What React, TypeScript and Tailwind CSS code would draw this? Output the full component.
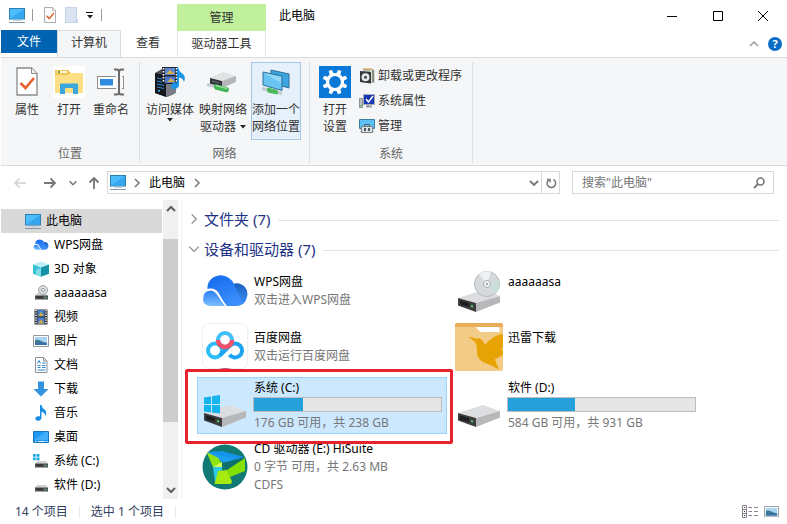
import type { ReactNode } from "react";

type IconProps = { className?: string };

function MonitorIcon({ className }: IconProps) {
  return (
    <svg viewBox="0 0 18 17" className={className} aria-hidden="true">
      <rect x="1.5" y="1.5" width="15" height="10.5" fill="#4cbcfb" stroke="#2d7fae" />
      <path d="M2 11.5 16 2v9.500z" fill="#35a7f0" />
      <path d="M5 13.500h8" stroke="#b9cfdd" />
      <path d="M1 15.500h16" stroke="#8298a8" />
    </svg>
  );
}

function CheckPage({ className }: IconProps) {
  return (
    <svg viewBox="0 0 22 29" className={className} aria-hidden="true">
      <path d="M1 1h14.500L21 6.500V28H1z" fill="#fff" stroke="#8a8a8a" strokeWidth="1.300" />
      <path d="M15.500 1v5.500H21" fill="#eee" stroke="#8a8a8a" />
      <path d="m4.500 16 5 5L18 11" fill="none" stroke="#e8622c" strokeWidth="2.600" />
    </svg>
  );
}

function FadedFolder({ className }: IconProps) {
  return (
    <svg viewBox="0 0 13 16" className={className} aria-hidden="true">
      <path d="M.5.5h11v11l1 1v3H.5z" fill="#d9e4f3" stroke="#c5d3e8" />
      <path d="M10.500 11.500h2v4h-2z" fill="#c8d8ee" />
    </svg>
  );
}

function OpenFolder({ className }: IconProps) {
  return (
    <svg viewBox="0 0 32 32" className={className} aria-hidden="true">
      <path d="M0 0h32v32H0z" fill="#fff" />
      <path d="M2 4h13l3 3h12v7H2z" fill="#efc453" />
      <path d="M4 5h10v2H4z" fill="#fff6d8" />
      <path d="M5 5h2v2H5z" fill="#66a33a" />
      <path d="M2 9h13l2-2h13v20H2z" fill="#fddf86" />
      <path d="M7 28V18.500q0-1 1-1h16q1 0 1 1V28h-5v-5q0-1-1-1h-6q-1 0-1 1v5z" fill="#3ba7dc" />
    </svg>
  );
}

function RenameIcon({ className }: IconProps) {
  return (
    <svg viewBox="0 0 28 28" className={className} aria-hidden="true">
      <rect x=".5" y="8.500" width="26" height="12" fill="#fff" stroke="#8d8d8d" />
      <rect x="3" y="11" width="13" height="6.500" fill="#2f8be0" />
      <path d="M19 8h6v13h-6z" fill="#f5f6f7" />
      <path d="M17 1.500h2.500q2.500 0 2.500 2.500v20q0 2.500-2.500 2.500H17M27 1.500h-2.500Q22 1.500 22 4v20q0 2.500 2.500 2.500H27" fill="none" stroke="#6a6a6a" strokeWidth="2" />
    </svg>
  );
}

function MediaIcon({ className }: IconProps) {
  return (
    <svg viewBox="0 0 32 32" className={className} aria-hidden="true">
      <path d="m1 7 7-4 12 3v22l-7 3L1 27z" fill="#4d5157" />
      <path d="m1 7 11 2.500V31L1 27z" fill="#16191d" />
      <path d="m12 9.500 10-3V27l-10 4z" fill="#7a7e84" />
      <path d="m3 12 7 1.500M3 15l7 1.500M3 18l7 1.500M3 21l7 1.500" stroke="#2d87d8" strokeWidth="1.200" />
      <path d="M4 24h2v1.500H4z" fill="#4ab1ff" />
      <path d="M8 1h16v17H8z" fill="#22262c" />
      <path d="M11 2h10v7H11z" fill="#5c85d6" />
      <path d="M11 10.500h10V17H11z" fill="#5077ca" />
      <path d="m12 8 4-4 5 4zM13 16l4-4 4 4z" fill="#d4b04a" />
      <path d="M9.500 2v15M22.500 2v15" stroke="#fff" strokeWidth="1.600" strokeDasharray="1.500 1.500" />
      <path d="M24 1q1 5 5 7 3 3 1 8-1-4-5-4.500V18q.5 4-4 5-4 .5-4-2.500t4-4q1.500-.3 2 .2V1z" fill="#1b94e6" />
    </svg>
  );
}

function NetworkDrive({ className }: IconProps) {
  return (
    <svg viewBox="0 0 32 24" className={className} aria-hidden="true">
      <path d="M3 8 16 2l13 4-14 5z" fill="#e1e3e5" />
      <path d="m15 11 14-5v6l-14 6z" fill="#b4b7ba" />
      <path d="m3 8 12 3v7L3 14z" fill="#34373a" />
      <path d="m5 11 7 2" stroke="#6f7377" />
      <path d="M0 14.500 22 20" stroke="#c3cacf" strokeWidth="3" />
      <path d="m8 14 13 3.500q2 3-1 5L8 19.500q-2-3 0-5.500z" fill="#46b758" />
      <path d="m9 15.500 11 3" stroke="#92df9c" strokeWidth="1.500" />
    </svg>
  );
}

function NetworkPlace({ className }: IconProps) {
  return (
    <svg viewBox="0 0 32 28" className={className} aria-hidden="true">
      <path d="m11 2 18 4v14l-18-5z" fill="#3ca5de" stroke="#2c6e98" />
      <path d="m3 4 19 4v14.500L3 17z" fill="#6ac4f2" stroke="#2c6e98" />
      <path d="m4 5 17 4v6z" fill="#94d7f8" />
      <path d="M2 20.500 22 25.500" stroke="#c3cacf" strokeWidth="3" />
      <path d="m8 19.500 9 2.500q2 2.500 0 4.500l-9-2q-2-2.500 0-5z" fill="#49b85a" />
    </svg>
  );
}

function GearTile({ className }: IconProps) {
  return (
    <svg viewBox="0 0 32 32" className={className} aria-hidden="true">
      <path d="M0 0h32v32H0z" fill="#0a78d7" />
      <circle cx="16" cy="16" r="7.500" fill="none" stroke="#fff" strokeWidth="3.200" />
      {[22.5, 67.5, 112.5, 157.5, 202.5, 247.5, 292.5, 337.5].map((angle) => (
        <path key={angle} d="M13.800 8 14.300 3.500h3.400L18.200 8z" fill="#fff" transform={`rotate(${angle} 16 16)`} />
      ))}
    </svg>
  );
}

function ProgramsIcon({ className }: IconProps) {
  return (
    <svg viewBox="0 0 16 16" className={className} aria-hidden="true">
      <path d="M4 1h10l1.500 1.500V15H4z" fill="#b9bdb9" />
      <path d="M11 2h2v12h-2z" fill="#dfe4de" />
      <path d="M13 2h2v12h-2z" fill="#87927c" />
      <path d="m1 3 11 1v11.500L1 14z" fill="#33373a" />
      <circle cx="6.500" cy="9.300" r="4" fill="#e5e8ea" />
      <circle cx="6.500" cy="9.300" r="1.500" fill="#444" />
      <path d="M4 1h9" stroke="#d39434" />
    </svg>
  );
}

function SystemIcon({ className }: IconProps) {
  return (
    <svg viewBox="0 0 16 16" className={className} aria-hidden="true">
      <path d="M.5 5.500h3v9h-3z" fill="#bfc3c4" stroke="#8c9294" />
      <path d="M1.500 12h1v1.500h-1z" fill="#35a93d" />
      <path d="M4.500 1.500h11v10h-11z" fill="#1a37b4" stroke="#a7abb0" />
      <path d="m7 6 2.500 3L14 3" fill="none" stroke="#fff" strokeWidth="1.500" />
      <path d="M7 13.500h6M9 12v2" stroke="#9a9fa4" strokeWidth="2" />
    </svg>
  );
}

function ManageIcon({ className }: IconProps) {
  return (
    <svg viewBox="0 0 16 16" className={className} aria-hidden="true">
      <path d="M.5 1.500h15v9H.5z" fill="#5bc1f5" stroke="#3a7fa6" />
      <path d="M1 13.500h14" stroke="#a3adb4" />
      <path d="M5.500 8V6.500h5V8" fill="none" stroke="#555d63" />
      <path d="M2.500 8.500h11v6h-11z" fill="#dfe3e6" stroke="#778087" />
      <path d="M5 10h2v3H5zM9 10h2v3H9z" fill="#4e565c" />
    </svg>
  );
}

function WpsCloud({ className }: IconProps) {
  return (
    <svg viewBox="0 0 48 34" className={className} aria-hidden="true">
      <defs>
        <linearGradient id="cloudMain" x1="0" y1="0" x2=".5" y2="1">
          <stop offset="0" stopColor="#1268ee" />
          <stop offset="1" stopColor="#3a8dfa" />
        </linearGradient>
        <linearGradient id="cloudFront" x1="0" y1="0" x2="0" y2="1">
          <stop offset="0" stopColor="#2a7ef5" />
          <stop offset="1" stopColor="#7cc0ff" />
        </linearGradient>
        <linearGradient id="cloudBack" x1="0" y1="0" x2="0" y2="1">
          <stop offset="0" stopColor="#1a5fbe" />
          <stop offset="1" stopColor="#3a92f5" />
        </linearGradient>
      </defs>
      <path d="M28 11q10-4.500 16 2 3.500 5 2 10-2 8-8 8.500z" fill="url(#cloudBack)" />
      <path d="M6.500 15Q6 7 13 3q8-4 15 1 3 2 5 6l7 16q1 3-1 5-1 1-3 1H25L17 18q-4-5-10.500-3z" fill="url(#cloudMain)" />
      <path d="M2 25q0-8 7.500-8.500 4 0 7 4.500 3 5 8 11H9q-7-1-7-7z" fill="url(#cloudFront)" />
      <path d="M5.500 16q6-2 10 2.500Q19 23 22 28l3.500 4.500" fill="none" stroke="#fff" strokeWidth="1.300" />
    </svg>
  );
}

function CubeIcon({ className }: IconProps) {
  return (
    <svg viewBox="0 0 16 16" className={className} aria-hidden="true">
      <path d="m0 3.500 8-3 8 3-8 3z" fill="#bdeef4" />
      <path d="m0 3.500 8 3v9.200l-8-3z" fill="#35c0d4" />
      <path d="m16 3.500-8 3v9.200l8-3z" fill="#1591a8" />
      <path d="M8 6.500 3 9v5l5 1.700z" fill="#7fdde8" />
    </svg>
  );
}

function DriveIcon({ className, windows, disc }: IconProps & { windows?: boolean; disc?: boolean }) {
  return (
    <svg viewBox="0 0 48 48" className={className} aria-hidden="true">
      <path d="M3 31 28 23l17 6-24 7z" fill="#dcdddf" />
      <path d="m21 36 24-7v6.500L21 45z" fill="#b7b8ba" />
      <path d="m3 31 18 5v9L3 38.500z" fill="#3b3d3f" />
      <path d="m5 33.500 9 2.500v4L5 37.500z" fill="#1c1e1f" />
      <path d="m16 38 2 .6v2l-2-.6z" fill="#53d266" />
      {disc && (
        <g>
          <circle cx="32" cy="17" r="12.500" fill="#d5d9db" stroke="#b3b7b9" />
          <path d="M32 17 24 7.500A12.500 12.500 0 0 1 36 5z" fill="#eef1f2" />
          <path d="m32 17 12-3a12.500 12.500 0 0 1-3 12z" fill="#c9ded9" />
          <circle cx="32" cy="17" r="3.500" fill="#f5f5f5" stroke="#a8acae" />
          <circle cx="32" cy="17" r="1.300" fill="#aaa" />
        </g>
      )}
      {windows && <path d="M3 15.500 10 14.500v7.500H3zM11 14.300 19 13v9h-8zM3 23h7v7.500l-7-1zM11 23h8v8.500l-8-1z" fill="#14b4ee" />}
    </svg>
  );
}

function SmallDrive({ className, windows, disc }: IconProps & { windows?: boolean; disc?: boolean }) {
  return (
    <svg viewBox="0 0 16 16" className={className} aria-hidden="true">
      <path d="M4 8h9l2 3H2z" fill="#cfd1d3" />
      <path d="M2 10.500h13v4H2z" fill="#4b4f51" />
      <path d="M3.500 12h6" stroke="#222" />
      <path d="M11.500 12h2v1.200h-2z" fill="#58d46b" />
      {disc && (
        <>
          <circle cx="10" cy="5" r="4.500" fill="#dadddf" stroke="#a2a5a7" />
          <circle cx="10" cy="5" r="1.500" fill="#fff" stroke="#999" />
        </>
      )}
      {windows && <path d="M0 1h2.700v2.700H0zM3.500 1h3v2.700h-3zM0 4.500h2.700v2.700H0zM3.500 4.500h3v2.700h-3z" fill="#18abe4" />}
    </svg>
  );
}

function VideoIcon({ className }: IconProps) {
  return (
    <svg viewBox="0 0 16 16" className={className} aria-hidden="true">
      <path d="M1.500.5h13v15h-13z" fill="#2b2d30" />
      <path d="M4.500 1h7v6.500h-7zM4.500 8.500h7V15h-7z" fill="#4a7fd0" />
      <path d="m5 7 3-4 3 4zM5 14.500l3-4 3 4z" fill="#cfaa3c" />
      <path d="M3 1v14M13 1v14" stroke="#fff" strokeWidth="1.500" strokeDasharray="1.200 1.200" />
    </svg>
  );
}

function PictureIcon({ className }: IconProps) {
  return (
    <svg viewBox="0 0 16 12" className={className} aria-hidden="true">
      <path d="M.5.500h15v11H.5z" fill="#fff" stroke="#8f9aa3" />
      <path d="M2 2h12v8H2z" fill="#a8d5f3" />
      <path d="M2 5q4-1 7 1.500 3 1.500 5 1V10H2z" fill="#3c7a8e" />
      <path d="M2 8.500q6-1.500 12 0V10H2z" fill="#3a6fae" />
    </svg>
  );
}

function DocIcon({ className }: IconProps) {
  return (
    <svg viewBox="0 0 16 16" className={className} aria-hidden="true">
      <path d="M2.500.5h8l3.500 3.500v11.500H2.500z" fill="#fff" stroke="#8b9297" />
      <path d="M10.500.5V4H14" fill="none" stroke="#8b9297" />
      <path d="m4.500 6.500 1.500-3 1.500 3M9 6h3.500M4.500 8.500h3M9 8.500h3.500M4.500 10.500h3M9 10.500h3.500M4.500 13h8" fill="none" stroke="#2c8ad0" />
    </svg>
  );
}

function DownloadIcon({ className }: IconProps) {
  return (
    <svg viewBox="0 0 16 16" className={className} aria-hidden="true">
      <path d="M5 .5h6V8h4.500L8 15.500.5 8H5z" fill="#3593de" />
    </svg>
  );
}

function MusicIcon({ className }: IconProps) {
  return (
    <svg viewBox="0 0 16 16" className={className} aria-hidden="true">
      <path d="M7 0h1.500q.5 3 3 4.500 3 2.500.8 6.500-.3-3.500-3.800-4.500v6q0 3-3.500 3.300-2.700 0-2.700-2 0-2.300 3.200-2.600H7z" fill="#1790e4" />
    </svg>
  );
}

function DesktopIcon({ className }: IconProps) {
  return (
    <svg viewBox="0 0 16 12" className={className} aria-hidden="true">
      <path d="M.5.500h15v11H.5z" fill="#1e9af5" stroke="#1576bd" />
      <path d="M1 9 12 1h3v8z" fill="#41aefb" />
      <path d="M2 10.500h1.500M5 10.500h7M13 10.500h1.500" stroke="#d7efff" />
    </svg>
  );
}

function BaiduIcon({ className }: IconProps) {
  return (
    <svg viewBox="0 0 48 48" className={className} aria-hidden="true">
      <rect x="1.500" y=".5" width="45" height="45" rx="6" fill="#fff" stroke="#efefef" />
      <circle cx="14" cy="27.500" r="7" fill="none" stroke="#2fbdf7" strokeWidth="4" />
      <path d="M28.500 31.700A7 7 0 1 0 29 22.600L19 32.400" fill="none" stroke="#1ea4f3" strokeWidth="4" />
      <circle cx="24" cy="17" r="7" fill="none" stroke="#40c0f8" strokeWidth="4" />
      <path d="M17 17a7 7 0 0 0 14 0" fill="none" stroke="#f5506c" strokeWidth="4.500" />
      <path d="M16 46.500q8-3 17 0z" fill="#c34a7a" />
    </svg>
  );
}

function ThunderIcon({ className }: IconProps) {
  return (
    <svg viewBox="0 0 48 48" className={className} aria-hidden="true">
      <rect width="48" height="48" rx="2" fill="#f2cb86" />
      <path d="M0 2q0-2 2-2h44q2 0 2 2v2H0z" fill="#e7ad58" />
      <path d="M21 4h22q1.500 0 1.500 1.500V9H27q-3 0-6-5z" fill="#fff" />
      <path d="M13 14q6 0 8 2 3-2 6 1 2 2 3 5 8-10 18-11v13l-2 2 2 1v5q-5 3-8 4 1 4 4 10.500-9-5-16-7.500-7-4-6-12 0-5-2-8-3-3-7-5z" fill="#e6a303" />
    </svg>
  );
}

function HiSuiteIcon({ className }: IconProps) {
  return (
    <svg viewBox="0 0 48 48" className={className} aria-hidden="true">
      <circle cx="24" cy="24" r="22.500" fill="#117a72" />
      <path d="m6 9 15-1 22 6-17 5z" fill="#1593ea" />
      <path d="m6 9 18 12 9-6L17 12z" fill="#1aa0ee" />
      <path d="m20 20 24-5-17 12z" fill="#0f6f6a" />
      <path d="M44 15v13l-15 6-3-7z" fill="#84e000" />
      <path d="m5.500 9 12 6 3.500 7-9 2z" fill="#8fe411" />
      <path d="m12 24 9-2v5l-4 8-3 4z" fill="#2fc9e8" />
      <path d="m17 28 9-1 5 11.500-1 2.500H13.500z" fill="#a6ea10" />
      <path d="m12 24 9-5v5z" fill="#d6fb57" />
    </svg>
  );
}

function Stroke({ d, className, box = "0 0 12 12", width = 1.5 }: IconProps & { d: string; box?: string; width?: number }) {
  return (
    <svg viewBox={box} className={className} fill="none" stroke="currentColor" strokeWidth={width} aria-hidden="true">
      <path d={d} />
    </svg>
  );
}

const chevronRight = "m4 2 4 4-4 4";
const chevronDown = "m2 4 4 4 4-4";
const chevronUp = "m2 8 4-4 4 4";

function Caret() {
  return (
    <svg viewBox="0 0 6 4" className="h-1 w-1.5 shrink-0" aria-hidden="true">
      <path d="M0 0h6L3 3.500z" fill="#222" />
    </svg>
  );
}

function BigButton({ icon, lines, caret, active }: { icon: ReactNode; lines: string[]; caret?: "below" | "inline"; active?: boolean }) {
  return (
    <button
      type="button"
      className={`flex h-[78px] flex-col items-center px-px ${active ? "bg-[#e6f0fa] outline-1 -outline-offset-1 outline-[#a6c8ea]" : ""}`}
    >
      <span className="flex h-[39px] items-center justify-center">{icon}</span>
      {lines.map((line, i) => (
        <span key={line} className="flex items-center gap-1 leading-[17px] whitespace-nowrap">
          {line}
          {caret === "inline" && i === lines.length - 1 && <Caret />}
        </span>
      ))}
      {caret === "below" && <Caret />}
    </button>
  );
}

function RibbonGroup({ label, children, className }: { label: string; children: ReactNode; className: string }) {
  return (
    <section aria-label={label} className="mt-1 mb-0.5 flex flex-col justify-between border-r border-[#dfe0e1]">
      <div className={`flex ${className}`}>{children}</div>
      <div className="text-center leading-[18px] text-[#666]">{label}</div>
    </section>
  );
}

const navItems: { name: string; icon: ReactNode }[] = [
  { name: "WPS网盘", icon: <WpsCloud className="w-4" /> },
  { name: "3D 对象", icon: <CubeIcon className="w-4" /> },
  { name: "aaaaaasa", icon: <SmallDrive className="w-4" disc /> },
  { name: "视频", icon: <VideoIcon className="w-4" /> },
  { name: "图片", icon: <PictureIcon className="w-4" /> },
  { name: "文档", icon: <DocIcon className="w-4" /> },
  { name: "下载", icon: <DownloadIcon className="w-4" /> },
  { name: "音乐", icon: <MusicIcon className="w-4" /> },
  { name: "桌面", icon: <DesktopIcon className="w-4" /> },
  { name: "系统 (C:)", icon: <SmallDrive className="w-4" windows /> },
  { name: "软件 (D:)", icon: <SmallDrive className="w-4" /> },
];

type Device = { name: string; icon: ReactNode; details?: string[]; used?: number; selected?: boolean };

const devices: Device[] = [
  { name: "WPS网盘", icon: <WpsCloud className="w-12" />, details: ["双击进入WPS网盘"] },
  { name: "aaaaaasa", icon: <DriveIcon className="w-12" disc /> },
  { name: "百度网盘", icon: <BaiduIcon className="w-12" />, details: ["双击运行百度网盘"] },
  { name: "迅雷下载", icon: <ThunderIcon className="w-12" /> },
  { name: "系统 (C:)", icon: <DriveIcon className="w-12" windows />, details: ["176 GB 可用，共 238 GB"], used: 26, selected: true },
  { name: "软件 (D:)", icon: <DriveIcon className="w-12" />, details: ["584 GB 可用，共 931 GB"], used: 36 },
  { name: "CD 驱动器 (E:) HiSuite", icon: <HiSuiteIcon className="w-12" />, details: ["0 字节 可用，共 2.63 MB", "CDFS"] },
];

function DeviceTile({ device }: { device: Device }) {
  return (
    <li
      className={`relative flex items-center gap-1 py-0.5 pl-1 ${device.selected ? "bg-[#cce8ff] outline-1 -outline-offset-1 outline-[#99d1ff]" : ""}`}
    >
      <span className="w-12 shrink-0">{device.icon}</span>
      <div className="min-h-9 leading-[18px] whitespace-nowrap">
        <div className="pl-px text-black">{device.name}</div>
        {device.used !== undefined && (
          <div role="meter" aria-label={device.name} aria-valuenow={device.used} aria-valuemin={0} aria-valuemax={100} className="mb-0.5 h-[15px] w-[189px] border border-[#bcbcbc] bg-[#e6e6e6]">
            <div className="h-full bg-[#26a0da]" style={{ width: `${device.used}%` }} />
          </div>
        )}
        {device.details?.map((line) => (
          <div key={line} className="pl-px text-[#777]">{line}</div>
        ))}
      </div>
      {device.selected && (
        <span className="pointer-events-none absolute -top-2 -right-1.5 -bottom-2.5 -left-3 z-10 rounded-xs border-3 border-[#e8222c]" />
      )}
    </li>
  );
}

function GroupHeader({ title, open }: { title: string; open?: boolean }) {
  return (
    <h2 className="flex h-[30px] items-center text-[15px] text-[#1e3287]">
      <button type="button" className="flex items-center gap-[3px] pb-0.5 whitespace-nowrap">
        <Stroke d={open ? chevronDown : chevronRight} className="size-3.5 text-[#8a8a8a]" width={1} />
        {title}
      </button>
      <span className="ml-2 h-px flex-1 bg-[#e2e2e2]" />
    </h2>
  );
}

export default function App() {
  return (
    <div className="flex min-h-screen flex-col bg-white pl-px font-['Noto_Sans','Noto_Sans_CJK_SC',sans-serif] text-[12px] text-[#333]">
      <header className="flex h-[57px]">
        <div className="flex w-44 flex-col">
          <div className="flex h-[31px] items-center pl-[7px]">
            <MonitorIcon className="w-[18px]" />
            <span className="ml-1.5 h-3 w-px bg-[#999]" />
            <CheckPage className="ml-[11px] h-4" />
            <FadedFolder className="ml-[9px] h-4" />
            <button type="button" aria-label="自定义快速访问工具栏" className="ml-2 flex flex-col items-center gap-0.5">
              <span className="h-px w-[7px] bg-black" />
              <Caret />
            </button>
            <span className="ml-2 h-3 w-px bg-[#999]" />
          </div>
          <div className="flex">
            <button type="button" className="h-[23px] w-14 bg-[#0063b1] text-white">文件</button>
            <button type="button" className="h-[27px] w-16 border border-b-0 border-[#dadbdc] bg-[#f5f6f7] pb-0.5">计算机</button>
            <button type="button" className="h-[26px] w-[54px]">查看</button>
          </div>
        </div>
        <div className="w-[89px] pt-1">
          <div className="flex h-[27px] items-center justify-center bg-[#c0f09c]">管理</div>
          <button type="button" className="h-[26px] w-full border-x border-[#e6e6e6]">驱动器工具</button>
        </div>
        <h1 className="flex h-[31px] items-center pl-[13px] text-black">此电脑</h1>
        <div className="ml-auto flex flex-col">
          <div className="flex h-[31px] items-center pr-px">
            <button type="button" aria-label="最小化" className="flex w-[46px] justify-center"><Stroke d="M1 6.500h10" className="size-3 text-black" width={1} /></button>
            <button type="button" aria-label="最大化" className="flex w-[45px] justify-center"><Stroke d="M1.500 1.500h9v9h-9z" className="size-3 text-black" width={1} /></button>
            <button type="button" aria-label="关闭" className="flex w-[46px] justify-center"><Stroke d="m1 1 10 10M11 1 1 11" className="size-3 text-black" width={1} /></button>
          </div>
          <div className="flex h-[26px] items-center justify-end gap-2 pr-[5px]">
            <button type="button" aria-label="最小化功能区"><Stroke d={chevronUp} className="size-3 text-[#9a9a9a]" /></button>
            <button type="button" aria-label="帮助" className="size-3.5 rounded-full bg-[#0a6cc4] text-[11px] leading-3.5 font-bold text-white">?</button>
          </div>
        </div>
      </header>

      <div className="flex h-[109px] border-y border-[#dadbdc] bg-[#f5f6f7]">
        <RibbonGroup label="位置" className="w-[138px] gap-2.5 pl-[13px]">
          <BigButton icon={<CheckPage className="h-[29px]" />} lines={["属性"]} />
          <div className="px-1.5"><BigButton icon={<OpenFolder className="-mx-1 w-8" />} lines={["打开"]} /></div>
          <div className="-ml-1.5"><BigButton icon={<RenameIcon className="w-7" />} lines={["重命名"]} /></div>
        </RibbonGroup>
        <RibbonGroup label="网络" className="w-[169px] gap-[3px] pl-[5px]">
          <BigButton icon={<MediaIcon className="w-8" />} lines={["访问媒体"]} caret="below" />
          <BigButton icon={<NetworkDrive className="w-8" />} lines={["映射网络", "驱动器"]} caret="inline" />
          <BigButton icon={<NetworkPlace className="w-8" />} lines={["添加一个", "网络位置"]} active />
        </RibbonGroup>
        <RibbonGroup label="系统" className="w-[162px] gap-[7px] pl-2">
          <BigButton icon={<GearTile className="w-8" />} lines={["打开", "设置"]} />
          <div className="flex flex-col pt-px">
            <button type="button" className="flex h-[25px] items-center gap-[3px]"><ProgramsIcon className="w-4" />卸载或更改程序</button>
            <button type="button" className="flex h-[25px] items-center gap-[3px]"><SystemIcon className="w-4" />系统属性</button>
            <button type="button" className="flex h-[25px] items-center gap-[3px]"><ManageIcon className="w-4" />管理</button>
          </div>
        </RibbonGroup>
      </div>

      <div className="flex items-center pt-[5px] pr-[13px] pb-1.5 pl-3 text-[#777]">
        <button type="button" aria-label="后退" className="text-[#cfcfcf]"><Stroke d="M13 7H2M6.500 2.500 2 7l4.500 4.500" box="0 0 14 14" className="size-3.5" /></button>
        <button type="button" aria-label="前进" className="ml-4"><Stroke d="M1 7h11M7.500 2.500 12 7l-4.500 4.500" box="0 0 14 14" className="size-3.5" width={1.8} /></button>
        <button type="button" aria-label="最近浏览的位置" className="ml-[11px]"><Stroke d={chevronDown} className="size-2.5" width={1.8} /></button>
        <button type="button" aria-label="上移" className="ml-[9px]"><Stroke d="M7 13V2M2.500 6.500 7 2l4.500 4.500" box="0 0 14 14" className="size-3.5" width={1.8} /></button>
        <div className="ml-1.5 flex h-[23px] flex-1 items-center border border-[#d9d9d9] text-black">
          <MonitorIcon className="ml-px w-[18px]" />
          <Stroke d={chevronRight} className="ml-1 size-3 text-[#777]" />
          <button type="button" className="ml-1.5">此电脑</button>
          <Stroke d={chevronRight} className="ml-1.5 size-3 text-[#777]" />
          <button type="button" aria-label="以前的位置" className="ml-auto flex w-[15px] justify-center text-[#777]"><Stroke d={chevronDown} className="size-3" width={1.8} /></button>
          <button type="button" aria-label="刷新" className="flex h-full w-[18px] items-center justify-center border-l border-[#d9d9d9] text-[#777]">
            <Stroke d="M3.500 3A4.300 4.300 0 1 0 8.500 2.500M2 2.500h3v3" className="size-3" />
          </button>
        </div>
        <div className="ml-3 flex h-[23px] w-[202px] items-center border border-[#d9d9d9] pr-2 pl-[9px]">
          <input type="text" aria-label="搜索" placeholder={'搜索"此电脑"'} className="h-[21px] min-w-0 flex-1 outline-none placeholder:text-[#757575]" />
          <svg viewBox="0 0 12 12" className="size-3" fill="none" stroke="#777" strokeWidth="1.600" aria-hidden="true">
            <circle cx="7.500" cy="4.500" r="3.500" />
            <path d="m5 7-4 4" strokeWidth="2" />
          </svg>
        </div>
      </div>

      <div className="flex flex-1">
        <nav className="w-[161px] pt-[9px] pb-0.5 text-black" aria-label="导航窗格">
          <button type="button" className="flex h-6 w-full items-center gap-1 bg-[#d9d9d9] pl-[23px]">
            <MonitorIcon className="w-[18px]" />此电脑
          </button>
          {navItems.map((item) => (
            <button key={item.name} type="button" className="flex h-6 w-full items-center gap-[5px] pl-8">
              {item.icon}
              {item.name}
            </button>
          ))}
        </nav>
        <div className="ml-px flex w-[15px] flex-col items-center bg-[#f0f0f0] text-[#606060]">
          <Stroke d={chevronUp} className="my-[3px] size-3" width={2} />
          <div className="mt-[21px] w-full flex-5 bg-[#cdcdcd]" />
          <div className="flex-[1.6]" />
          <Stroke d={chevronDown} className="my-[3px] size-3" width={2} />
        </div>
        <main className="ml-[3px] flex-1 border-l border-[#f3f3f3] pt-[5px] pr-2">
          <div className="pl-[5px]">
            <GroupHeader title="文件夹 (7)" />
            <GroupHeader title="设备和驱动器 (7)" open />
          </div>
          <ul className="grid grid-cols-[repeat(auto-fill,250px)] gap-1 pl-[15px]">
            {devices.map((device) => <DeviceTile key={device.name} device={device} />)}
          </ul>
        </main>
      </div>

      <footer className="flex h-[25px] items-center pr-2 pl-3.5 text-[#31405e]">
        <span>14 个项目</span>
        <span className="mx-[11px] h-3 w-px bg-[#e8e8e8]" />
        <span>选中 1 个项目</span>
        <span className="mx-[11px] h-3 w-px bg-[#e8e8e8]" />
        <button type="button" aria-label="详细信息" className="ml-auto">
          <svg viewBox="0 0 16 13" className="w-4" fill="none" stroke="#8a7f8c" aria-hidden="true">
            <path d="M.5.500h4v12h-4zM.5 4.500h4M.5 8.500h4M6.500 2.500H10M12 2.500h4M6.500 6.500H10M12 6.500h4M6.500 10.500H10M12 10.500h4" />
            <path d="M2 2.500h1M2 6.500h1M2 10.500h1" stroke="#333" />
          </svg>
        </button>
        <button type="button" aria-label="大图标" className="ml-1.5"><PictureIcon className="w-[15px]" /></button>
      </footer>
    </div>
  );
}
